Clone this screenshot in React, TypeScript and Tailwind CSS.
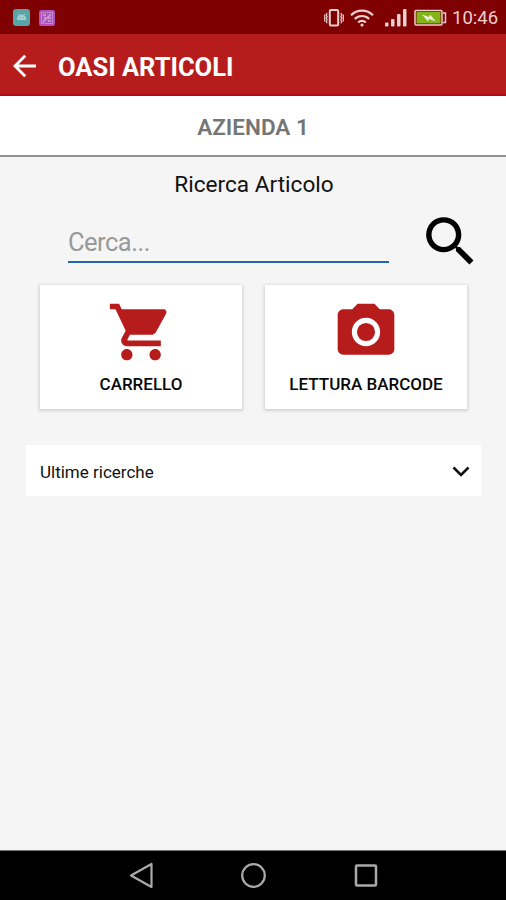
import type { ReactNode } from "react";

function StatusBar() {
  return (
    <div className="flex h-[34px] shrink-0 items-center bg-[#7f0000] pl-[13px] pr-[8px] pt-px">
      <svg className="h-[17px] w-[17px]" viewBox="0 0 17 17">
        <rect width="17" height="17" rx="3" fill="#57a5a8" />
        <path d="M4 11V9.5a4.5 4 0 0 1 9 0V11z" fill="#a8cfd0" />
        <path d="M5 4.5l1.5 2M12 4.5l-1.5 2" stroke="#a8cfd0" />
        <path d="M6.5 8.5h1M9.500 8.500h1" stroke="#57a5a8" />
      </svg>
      <svg className="ml-[9px] h-[16px] w-[16px]" viewBox="0 0 16 16">
        <rect width="16" height="16" rx="2.500" fill="#ad55bd" />
        <rect x="2.500" y="2.500" width="11" height="11" fill="none" stroke="#c583d0" />
        <path d="M4 12l8-8M4 5h3M5 8h2M9 8h3M9 11h3" stroke="#d3a0da" strokeWidth="1.400" />
      </svg>
      <div className="grow" />
      <svg className="h-[20px] w-[20px]" viewBox="0 0 20 20" fill="none" stroke="#ecd0d0">
        <rect x="5.800" y="2" width="8.400" height="15.500" rx="1.200" strokeWidth="2" />
        <path d="M3.200 5l-1 1.700 1 1.700-1 1.700 1 1.700-1 1.700 1 1.700M.7 6.500v7M16.800 5l1 1.700-1 1.700 1 1.700-1 1.700 1 1.700-1 1.700M19.300 6.500v7" strokeWidth="1.200" />
      </svg>
      <svg className="ml-[6px] h-[20px] w-[24px]" viewBox="0 0 24 20" fill="none" stroke="#ecd0d0" strokeWidth="2.200">
        <path d="M1 7.200a15.500 15.500 0 0 1 22 0M4.800 11a10.200 10.200 0 0 1 14.400 0M8.200 14.500a5.400 5.400 0 0 1 7.600 0" />
        <circle cx="12" cy="17" r="1.600" fill="#ecd0d0" stroke="none" />
      </svg>
      <svg className="ml-[11px] h-[20px] w-[22px]" viewBox="0 0 22 20" fill="#ecd0d0">
        <rect x="0" y="14.500" width="3.500" height="4" rx="1" />
        <rect x="6" y="11" width="3.500" height="7.500" rx="1" />
        <rect x="12" y="6" width="3.500" height="12.500" rx="1" />
        <rect x="18" y="1" width="3.500" height="17.500" rx="1" />
      </svg>
      <svg className="ml-[7px] h-[18px] w-[33px]" viewBox="0 0 33 18">
        <rect x="1" y="1.500" width="27" height="14.500" rx="1" fill="#7f0000" stroke="#ecd0d0" strokeWidth="1.500" />
        <rect x="2.500" y="3" width="24" height="11.500" fill="#82b516" />
        <path d="M29 4h2.500v9.500H29" fill="none" stroke="#ecd0d0" strokeWidth="1.500" />
        <path d="M8 5.500l7 2.500 1-2.500 6 7-7-2.500-1 2.500z" fill="#f1eadb" />
      </svg>
      <span className="ml-[5px] w-[46px] whitespace-nowrap pt-[2px] text-[18.500px] leading-none text-[#ecd0d0]">10:46</span>
    </div>
  );
}

function ActionCard({ label, children }: { label: string; children: ReactNode }) {
  return (
    <button className="flex h-[124px] w-[202px] flex-col items-center bg-white pt-[13px] shadow-[0_1px_3px_1px_rgba(0,0,0,0.15)]">
      <svg className="h-[68px] w-[68px] shrink-0" viewBox="0 0 24 24" fill="#b71c1c">{children}</svg>
      <span className="mt-[8px] whitespace-nowrap text-[17px] font-medium leading-[20px] text-[#080808]">{label}</span>
    </button>
  );
}

export default function App() {
  return (
    <div className="flex h-[900px] w-[506px] flex-col overflow-hidden bg-[#f5f5f5] font-['Roboto',sans-serif]">
      <StatusBar />
      <header className="flex h-[62px] shrink-0 items-center border-b-2 border-[#ad0c0c] bg-[#b71c1c] pl-[13px] pt-[4px]">
        <svg className="h-[24px] w-[24px]" viewBox="0 0 24 24" fill="none" stroke="#fff" strokeWidth="2.800">
          <path d="M23 12H2M12.200 1.800L2 12l10.200 10.200" />
        </svg>
        <h1 className="ml-[21px] whitespace-nowrap pt-[2px] text-[25.500px] font-bold leading-[30px] text-white">OASI ARTICOLI</h1>
      </header>
      <div className="flex h-[61px] shrink-0 items-center justify-center border-b-2 border-[#929292] bg-white pt-[5px] text-[22.500px] font-semibold text-[#757575]">
        <span>AZIENDA 1</span>
      </div>
      <main className="flex grow flex-col">
        <h2 className="mt-[13px] pl-[2px] text-center text-[22.600px] leading-[30px] text-[#111]">Ricerca Articolo</h2>
        <div className="mt-[9px] flex h-[65px] pl-[68px]">
          <div className="flex h-[54px] w-[321px] items-end border-b-2 border-[#2467ad] pb-[4px] text-[25.500px] leading-[30px] text-[#999]">
            <span className="tracking-[-0.500px]">Cerca...</span>
          </div>
          <svg className="ml-[29px] h-[65px] w-[65px]" viewBox="0 0 24 24" fill="#000">
            <path d="M15.500 14h-.79l-.28-.27A6.471 6.471 0 0 0 16 9.500 6.500 6.500 0 1 0 9.500 16c1.610 0 3.090-.59 4.230-1.570l.27.28v.79l5 4.990L20.490 19l-4.990-5zm-6 0C7.010 14 5 11.990 5 9.500S7.010 5 9.500 5 14 7.010 14 9.500 11.990 14 9.500 14z" />
          </svg>
        </div>
        <div className="mt-[11px] flex gap-[23px] pl-[40px]">
          <ActionCard label="CARRELLO">
            <path d="M7 18c-1.100 0-1.990.9-1.990 2S5.900 22 7 22s2-.9 2-2-.9-2-2-2zM1 2v2h2l3.600 7.590-1.350 2.450c-.16.28-.25.61-.25.960 0 1.100.9 2 2 2h12v-2H7.420c-.14 0-.25-.11-.25-.25l.030-.12.900-1.630h7.450c.750 0 1.410-.410 1.750-1.030l3.580-6.490A1.003 1.003 0 0 0 20 4H5.210l-.94-2H1zm16 16c-1.100 0-1.990.9-1.990 2s.89 2 1.990 2 2-.9 2-2-.9-2-2-2z" />
          </ActionCard>
          <ActionCard label="LETTURA BARCODE">
            <circle cx="12" cy="12" r="3.200" />
            <path d="M9 2L7.170 4H4c-1.100 0-2 .9-2 2v12c0 1.100.9 2 2 2h16c1.100 0 2-.9 2-2V6c0-1.100-.9-2-2-2h-3.170L15 2H9zm3 15c-2.760 0-5-2.240-5-5s2.240-5 5-5 5 2.240 5 5-2.240 5-5 5z" />
          </ActionCard>
        </div>
        <button className="ml-[26px] mt-[36px] flex h-[51px] w-[455px] items-center justify-between bg-white pl-[14px] pr-[11px] pt-[2px] text-[17px] text-[#111]">
          <span className="whitespace-nowrap pt-[2px]">Ultime ricerche</span>
          <svg className="h-[12px] w-[18px]" viewBox="0 0 18 12" fill="none" stroke="#111" strokeWidth="2.600">
            <path d="M1.500 1.500L9 9l7.500-7.500" />
          </svg>
        </button>
      </main>
      <nav className="flex h-[50px] shrink-0 items-center border-t border-[#777] bg-black pl-[129px]">
        <svg className="h-[28px] w-[25px]" viewBox="0 0 25 28" fill="none" stroke="#aaa" strokeWidth="2.200">
          <path d="M2 13.500L22.500 2v23z" strokeLinejoin="round" />
        </svg>
        <svg className="ml-[87px] h-[26px] w-[26px]" viewBox="0 0 26 26" fill="none" stroke="#aaa" strokeWidth="2.200">
          <circle cx="12.500" cy="12.500" r="11.300" />
        </svg>
        <svg className="ml-[87px] h-[24px] w-[24px]" viewBox="0 0 24 24" fill="none" stroke="#aaa" strokeWidth="2.500">
          <rect x="2" y="1.500" width="20" height="20" rx="1" />
        </svg>
      </nav>
    </div>
  );
}
